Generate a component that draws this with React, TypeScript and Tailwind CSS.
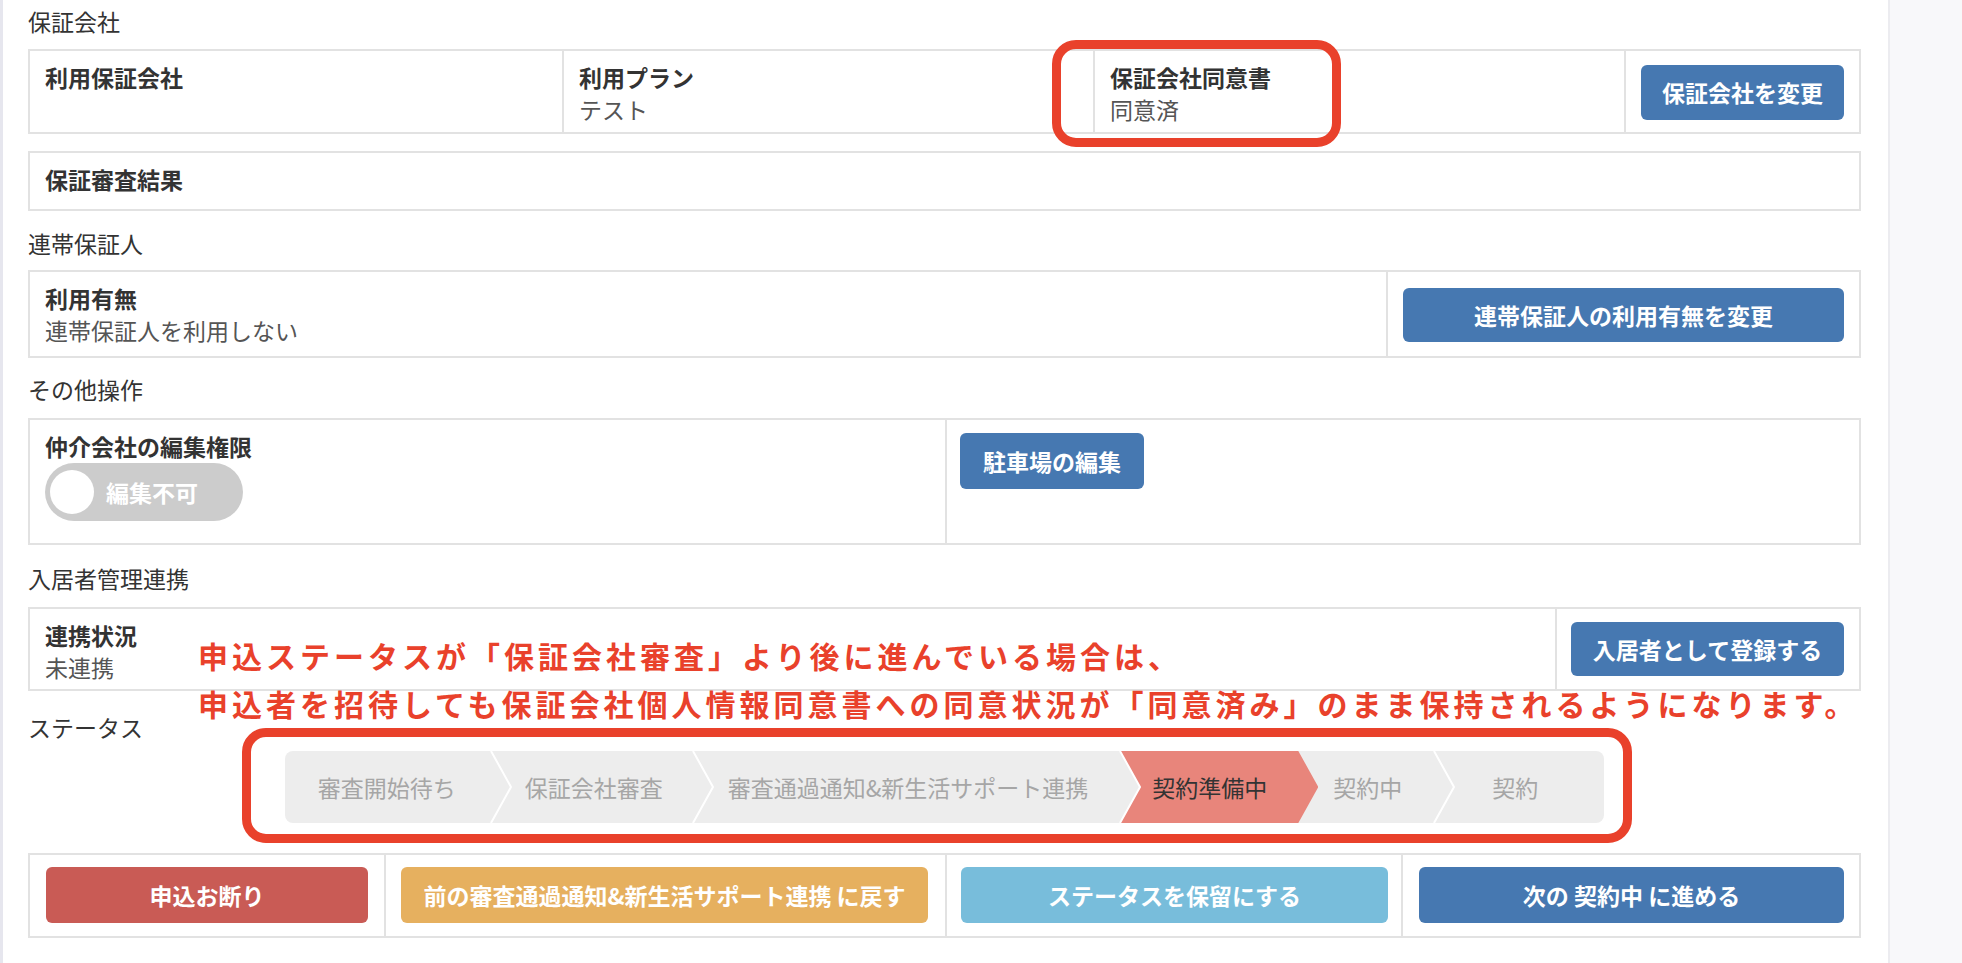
import React from "react";

type Step = { label: string; cls: string; active?: boolean; last?: boolean };

const STEPS: Step[] = [
  { label: "審査開始待ち", cls: "pl-[33px] pr-[35px]" },
  { label: "保証会社審査", cls: "pl-[34px] pr-[30px]" },
  { label: "審査通過通知&新生活サポート連携", cls: "pl-[35px] pr-[32px]" },
  { label: "契約準備中", cls: "pl-[32px] pr-[31px]", active: true },
  { label: "契約中", cls: "pl-[35px] pr-[32px]" },
  { label: "契約", cls: "pl-[58px] pr-[66px]", last: true },
];

function SectionLabel({ children, className = "" }: { children: React.ReactNode; className?: string }) {
  return <div className={`h-[30px] text-[23px] leading-[30px] text-[#333] ${className}`}>{children}</div>;
}

function Btn({ children, color, className = "" }: { children: React.ReactNode; color: string; className?: string }) {
  return (
    <div
      className={`flex items-center justify-center rounded-[6px] text-[23px] font-bold text-white ${color} ${className}`}
    >
      {children}
    </div>
  );
}

function Field({ label, value }: { label: string; value?: string }) {
  return (
    <div className="text-[23px] leading-[32px]">
      <div className="font-bold text-[#333]">{label}</div>
      {value && <div className="text-[#555]">{value}</div>}
    </div>
  );
}

function StatusBar() {
  return (
    <div className="flex h-[72px] self-center overflow-hidden rounded-[8px] bg-[#ededed]">
      {STEPS.map((s) => (
        <div key={s.label} className={`relative flex h-full items-center ${s.cls}`}>
          {s.active && (
            <div className="absolute inset-y-0 left-0 right-[-20px] bg-[#e8857b] [clip-path:polygon(0_0,calc(100%-20px)_0,100%_50%,calc(100%-20px)_100%,0_100%,20px_50%)]" />
          )}
          {!s.active && !s.last && (
            <svg className="absolute right-[-21px] top-0 z-10 h-[72px] w-[22px]" viewBox="0 0 22 72">
              <polyline points="1,0 21,36 1,72" fill="none" stroke="#ffffff" strokeWidth="2" />
            </svg>
          )}
          <span
            className={`relative z-20 whitespace-nowrap text-[23px] ${s.active ? "text-[#333]" : "text-[#a6a6a6]"}`}
          >
            {s.label}
          </span>
        </div>
      ))}
    </div>
  );
}

export default function App() {
  return (
    <div className="relative flex h-[963px] w-[1962px] overflow-hidden bg-white font-['Noto_Sans_CJK_JP','Noto_Sans',sans-serif]">
      <div className="flex w-[1888px] flex-col border-l-[3px] border-[#e6e6ee] pl-[25px] pr-[27px] pt-[6px]">
        <SectionLabel>保証会社</SectionLabel>

        <div className="mt-[13px] flex h-[85px] border-2 border-[#e2e2e2]">
          <div className="w-[532px] px-[15px] pt-[10px]">
            <Field label="利用保証会社" />
          </div>
          <div className="w-[531px] border-l-2 border-[#e2e2e2] px-[15px] pt-[10px]">
            <Field label="利用プラン" value="テスト" />
          </div>
          <div className="w-[531px] border-l-2 border-[#e2e2e2] px-[15px] pt-[10px]">
            <Field label="保証会社同意書" value="同意済" />
          </div>
          <div className="flex-1 border-l-2 border-[#e2e2e2] px-[15px] pt-[14px]">
            <Btn color="bg-[#4678b1]" className="h-[55px]">保証会社を変更</Btn>
          </div>
        </div>

        <div className="mt-[17px] h-[60px] border-2 border-[#e2e2e2] px-[15px] pt-[10px]">
          <Field label="保証審査結果" />
        </div>

        <SectionLabel className="mt-[17px]">連帯保証人</SectionLabel>
        <div className="mt-[12px] flex h-[88px] border-2 border-[#e2e2e2]">
          <div className="w-[1356px] px-[15px] pt-[10px]">
            <Field label="利用有無" value="連帯保証人を利用しない" />
          </div>
          <div className="flex-1 border-l-2 border-[#e2e2e2] px-[15px] pt-[16px]">
            <Btn color="bg-[#4678b1]" className="h-[54px]">連帯保証人の利用有無を変更</Btn>
          </div>
        </div>

        <SectionLabel className="mt-[16px]">その他操作</SectionLabel>
        <div className="mt-[14px] flex h-[127px] border-2 border-[#e2e2e2]">
          <div className="w-[915px] px-[15px] pt-[10px]">
            <Field label="仲介会社の編集権限" />
            <div className="mt-[1px] flex h-[58px] w-[198px] items-center gap-[12px] rounded-full bg-[#cccccc] pl-[5px]">
              <div className="h-[44px] w-[44px] rounded-full bg-white" />
              <span className="text-[23px] font-bold text-white">編集不可</span>
            </div>
          </div>
          <div className="flex-1 border-l-2 border-[#e2e2e2] px-[13px] pt-[13px]">
            <Btn color="bg-[#4678b1]" className="h-[56px] w-[184px]">駐車場の編集</Btn>
          </div>
        </div>

        <SectionLabel className="mt-[18px]">入居者管理連携</SectionLabel>
        <div className="mt-[14px] flex h-[84px] border-2 border-[#e2e2e2]">
          <div className="w-[1525px] px-[15px] pt-[10px]">
            <Field label="連携状況" value="未連携" />
          </div>
          <div className="flex-1 border-l-2 border-[#e2e2e2] pl-[14px] pr-[15px] pt-[13px]">
            <Btn color="bg-[#4678b1]" className="h-[54px]">入居者として登録する</Btn>
          </div>
        </div>

        <SectionLabel className="mt-[21px]">ステータス</SectionLabel>
        <div className="mt-[9px] flex justify-center">
          <StatusBar />
        </div>

        <div className="mt-[30px] flex h-[85px] border-2 border-[#e2e2e2]">
          <div className="w-[354px] px-[16px] pt-[12px]">
            <Btn color="bg-[#c95b55]" className="h-[56px]">申込お断り</Btn>
          </div>
          <div className="w-[561px] border-l-2 border-[#e2e2e2] pl-[15px] pr-[17px] pt-[12px]">
            <Btn color="bg-[#e6b05f]" className="h-[56px]">前の審査通過通知&新生活サポート連携 に戻す</Btn>
          </div>
          <div className="w-[456px] border-l-2 border-[#e2e2e2] pl-[14px] pr-[13px] pt-[12px]">
            <Btn color="bg-[#78bddb]" className="h-[56px]">ステータスを保留にする</Btn>
          </div>
          <div className="flex-1 border-l-2 border-[#e2e2e2] pl-[16px] pr-[15px] pt-[12px]">
            <Btn color="bg-[#4678b1]" className="h-[56px]">次の 契約中 に進める</Btn>
          </div>
        </div>
      </div>

      <div className="flex-1 border-l-2 border-[#ececf0] bg-[#f8f8fa]" />

      {/* annotation overlay */}
      <div className="pointer-events-none absolute left-[1052px] top-[40px] h-[107px] w-[289px] rounded-[24px] border-[9px] border-[#e9412b]" />
      <div className="pointer-events-none absolute left-[242px] top-[728px] h-[115px] w-[1390px] rounded-[24px] border-[9px] border-[#e9412b]" />
      <div className="pointer-events-none absolute left-[198px] top-[631px] whitespace-nowrap text-[30px] font-bold leading-[48px] tracking-[4px] text-[#e9412b]">
        <div>申込ステータスが「保証会社審査」より後に進んでいる場合は、</div>
        <div>申込者を招待しても保証会社個人情報同意書への同意状況が「同意済み」のまま保持されるようになります。</div>
      </div>
    </div>
  );
}
